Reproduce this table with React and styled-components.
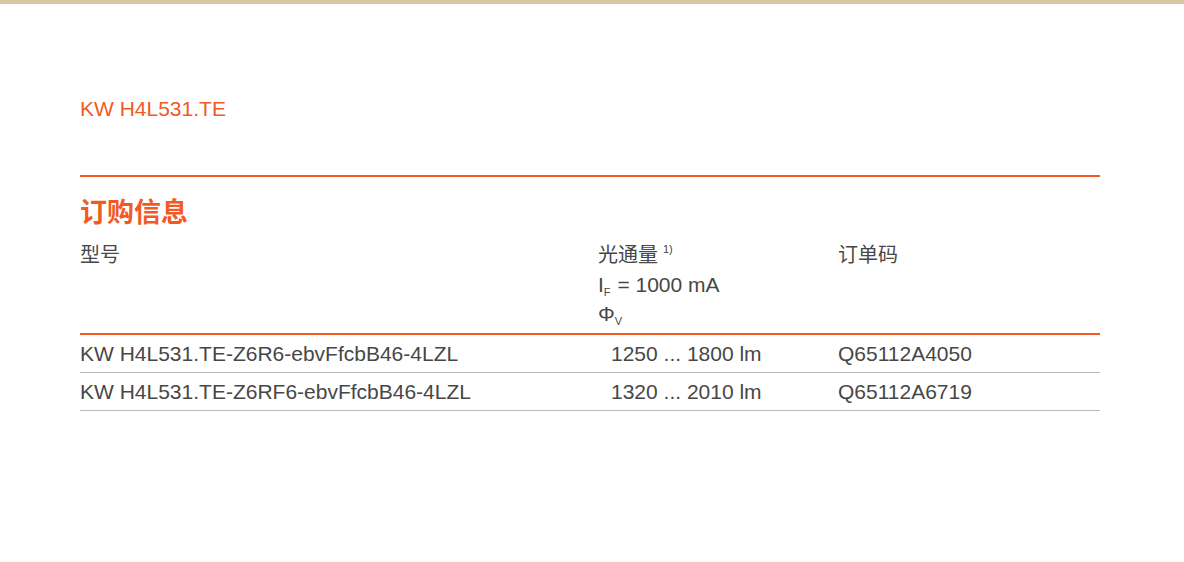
import React from 'react';
import styled, { createGlobalStyle } from 'styled-components';

const GlobalStyle = createGlobalStyle`
  body {
    margin: 0;
    background: #fff;
    font-family: "Liberation Sans", Arial, "Noto Sans CJK SC", sans-serif;
    color: #474747;
  }
`;

const ORANGE = '#f15a24';

const TopBar = styled.div`
  height: 4px;
  background: #dbc6a3;
`;

const Content = styled.main`
  padding: 0 84px 0 80px;
`;

const ProductTitle = styled.h2`
  margin: 91px 0 0;
  font-size: 21px;
  font-weight: normal;
  line-height: 28px;
  color: ${ORANGE};
`;

const Divider = styled.hr`
  margin: 52px 0 0;
  border: none;
  height: 2px;
  background: ${ORANGE};
`;

const SectionHeading = styled.h3`
  margin: 19px 0 0;
  font-size: 27px;
  font-weight: bold;
  line-height: 34px;
  color: ${ORANGE};
`;

const Table = styled.table`
  width: 100%;
  border-collapse: collapse;
  margin-top: 10px;
  font-size: 21px;
`;

const Th = styled.th`
  text-align: left;
  font-weight: normal;
  vertical-align: top;
  padding: 0 0 5px;
  line-height: 29px;
  border-bottom: 2px solid ${ORANGE};
  width: ${(p) => p.$width || 'auto'};
`;

const CjkLabel = styled.span`
  font-size: 20px;
`;

const Sup = styled.sup`
  font-size: 11px;
  vertical-align: top;
  position: relative;
  top: -5px;
  margin-left: 5px;
`;

const Sub = styled.sub`
  font-size: 11px;
  vertical-align: bottom;
  position: relative;
  top: 8px;
  margin-right: 1px;
`;

const HeadLine = styled.div`
  white-space: nowrap;
`;

const Td = styled.td`
  height: 37px;
  padding: 0 0 0 ${(p) => (p.$indent ? '13px' : '0')};
  border-bottom: 1px solid #b9b9b9;
  line-height: 37px;
  white-space: nowrap;
`;

const rows = [
  { model: 'KW H4L531.TE-Z6R6-ebvFfcbB46-4LZL', flux: '1250 ... 1800 lm', code: 'Q65112A4050' },
  { model: 'KW H4L531.TE-Z6RF6-ebvFfcbB46-4LZL', flux: '1320 ... 2010 lm', code: 'Q65112A6719' },
];

const App = () => {
  return (
    <>
      <GlobalStyle />
      <TopBar />
      <Content>
        <ProductTitle>KW H4L531.TE</ProductTitle>
        <Divider />
        <SectionHeading>订购信息</SectionHeading>
        <Table>
          <thead>
            <tr>
              <Th $width="518px"><CjkLabel>型号</CjkLabel></Th>
              <Th $width="240px">
                <HeadLine><CjkLabel>光通量</CjkLabel><Sup>1)</Sup></HeadLine>
                <HeadLine>I<Sub>F</Sub> = 1000 mA</HeadLine>
                <HeadLine>Φ<Sub>V</Sub></HeadLine>
              </Th>
              <Th><CjkLabel>订单码</CjkLabel></Th>
            </tr>
          </thead>
          <tbody>
            {rows.map((row) => (
              <tr key={row.code}>
                <Td>{row.model}</Td>
                <Td $indent>{row.flux}</Td>
                <Td>{row.code}</Td>
              </tr>
            ))}
          </tbody>
        </Table>
      </Content>
    </>
  );
};

export default App;
